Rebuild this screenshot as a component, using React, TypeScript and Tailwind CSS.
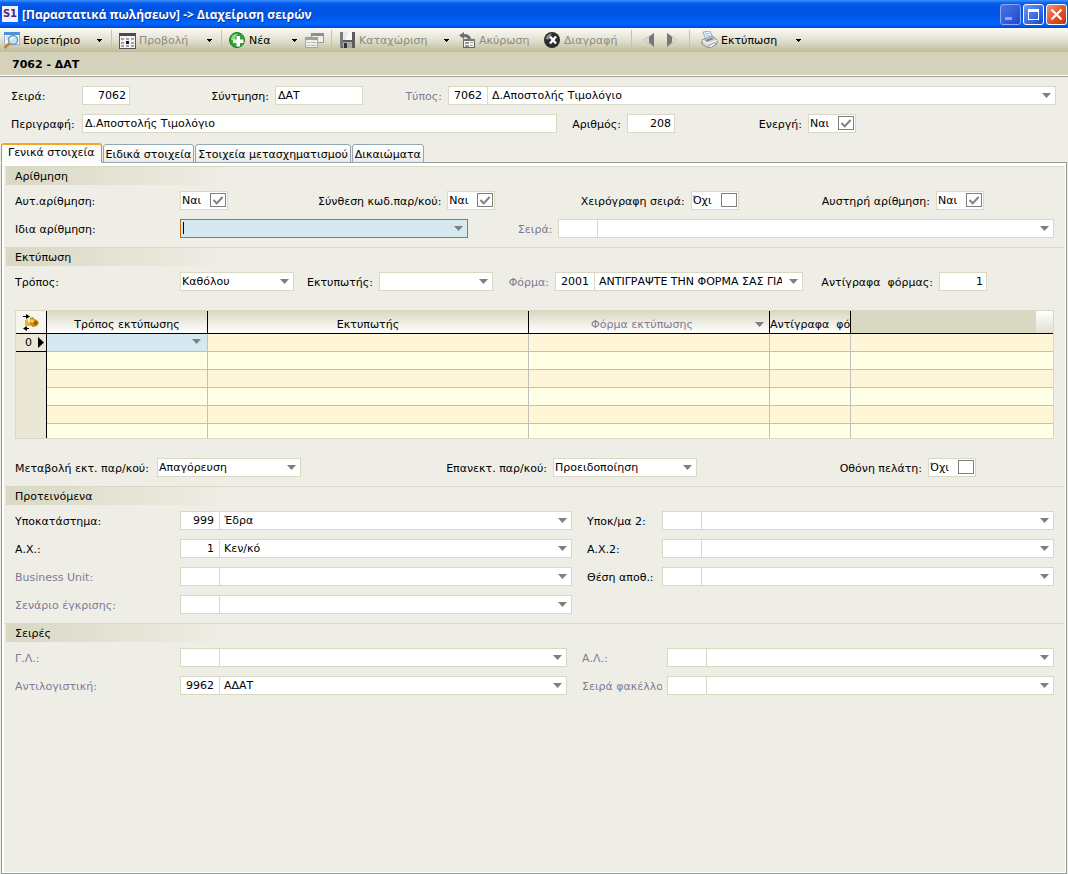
import { useId, useState, type ReactNode } from "react";
import clsx from "clsx";

const FIELD = "h-[19px] border border-[#d9d8c3] bg-white";

function Caret({ className }: { className?: string }) {
  return (
    <svg viewBox="0 0 9 5" className={clsx("h-[5px] w-[9px]", className)} aria-hidden="true">
      <path d="M0 0h9L4.5 5z" fill="#7f7f7f" />
    </svg>
  );
}

function MenuCaret() {
  return (
    <svg viewBox="0 0 5 3" className="h-[3px] w-[5px]" aria-hidden="true">
      <path d="M0 0h5v1H4v1H3v1H2V2H1V1H0z" fill="#000" />
    </svg>
  );
}

/* Form pieces */

interface LabelProps {
  htmlFor: string;
  children: ReactNode;
  muted?: boolean;
  align?: "left" | "right";
  className?: string;
}

function Label({ htmlFor, children, muted, align = "left", className }: LabelProps) {
  return (
    <label
      htmlFor={htmlFor}
      className={clsx(
        "overflow-hidden whitespace-pre pt-[2px] leading-[17px]",
        align === "right" && "pr-[6px] text-right",
        muted ? "text-[#7d7a99]" : "text-black",
        className
      )}
    >
      {children}
    </label>
  );
}

interface TextFieldProps {
  id: string;
  value?: string;
  numeric?: boolean;
  className?: string;
}

function TextField({ id, value = "", numeric, className }: TextFieldProps) {
  return (
    <input
      id={id}
      type="text"
      defaultValue={value}
      className={clsx(FIELD, "min-w-0 pb-px outline-none", numeric ? "pl-1 pr-[3px] text-right" : "px-[2px]", className)}
    />
  );
}

interface SelectFieldProps {
  id: string;
  value?: string;
  active?: boolean;
  className?: string;
}

function SelectField({ id, value = "", active, className }: SelectFieldProps) {
  return (
    <div
      className={clsx(
        "relative h-[19px] min-w-0 border",
        active ? "border-[#c8690d] bg-[#d6e8f0]" : "border-[#d9d8c3] bg-white",
        className
      )}
    >
      <select
        id={id}
        defaultValue={value}
        className="block h-[17px] w-full appearance-none truncate pb-px pl-px pr-5 text-clip outline-none"
      >
        <option value={value}>{value}</option>
      </select>
      {active && <span className="absolute left-[2px] top-[2px] h-3 w-px bg-black" />}
      <Caret className="pointer-events-none absolute right-1 top-[6px]" />
    </div>
  );
}

interface LookupFieldProps {
  id: string;
  code?: string;
  value?: string;
  label: string;
}

function LookupField({ id, code = "", value = "", label }: LookupFieldProps) {
  return (
    <div className={clsx(FIELD, "relative flex min-w-0")}>
      <input
        id={id}
        type="text"
        defaultValue={code}
        className="w-[39px] shrink-0 border-r border-[#d9d8c3] pb-px pr-[5px] text-right outline-none"
      />
      <select
        aria-label={label}
        defaultValue={value}
        className="block h-[17px] min-w-0 flex-1 appearance-none truncate pb-px pl-1 pr-5 text-clip outline-none"
      >
        <option value={value}>{value}</option>
      </select>
      <Caret className="pointer-events-none absolute right-1 top-[6px]" />
    </div>
  );
}

function CheckField({ id, initial }: { id: string; initial: boolean }) {
  const [checked, setChecked] = useState(initial);
  return (
    <div className={clsx(FIELD, "flex w-12 items-start justify-between pl-px pr-px pt-px")}>
      <span className="leading-[15px]">{checked ? "Ναι" : "Όχι"}</span>
      <span className="relative block h-[14px] w-4">
        <input
          id={id}
          type="checkbox"
          checked={checked}
          onChange={(e) => setChecked(e.target.checked)}
          className="block h-[14px] w-4 appearance-none border border-[#7f7f7f] bg-white"
        />
        {checked && (
          <svg viewBox="0 0 16 14" className="pointer-events-none absolute inset-0" aria-hidden="true">
            <path d="M3.5 7l3.2 3.4L12.6 4" fill="none" stroke="#7f7f7f" strokeWidth="2" />
          </svg>
        )}
      </span>
    </div>
  );
}

function Section({ title, children }: { title: string; children: ReactNode }) {
  return (
    <section className="border-t border-[#d9d8c3] pb-[9px]">
      <h2 className="ml-px h-[18px] w-56 bg-linear-to-r from-[#d9d8c3] to-[#efeee6] pl-[9px] leading-[19px]">{title}</h2>
      <div className="flex flex-col gap-[9px] px-[10px] pt-[6px]">{children}</div>
    </section>
  );
}

/* Toolbar icons */

function BrowseIcon() {
  return (
    <svg viewBox="0 0 17 17" className="size-[17px]">
      <rect x="1.5" y="1.5" width="15" height="11" fill="#f4f8fc" stroke="#8fb4d8" />
      <path d="M1 0h16v3H1z" fill="#4a93d6" />
      <path d="M3 5h3M3 7h2" stroke="#b9cfe2" />
      <circle cx="10" cy="8" r="4.5" fill="#c2e4f7" stroke="#7896ab" strokeWidth="1.4" />
      <path d="M7.500 7.500q1-2.500 4-2" fill="none" stroke="#fff" strokeWidth="1.400" />
      <path d="M6.600 11.200L1.500 16" stroke="#c8812f" strokeWidth="2.600" />
    </svg>
  );
}

function ViewIcon() {
  return (
    <svg viewBox="0 0 17 17" className="size-[17px]">
      <rect x=".5" y="1.500" width="16" height="15" fill="#f3f3f3" stroke="#555" />
      <path d="M0 1h17v3H0z" fill="#4a4a4a" />
      <path d="M2 6h3v2H2zM7 6h3v2H7zM12 6h3v2h-3zM2 10h3v2H2zM12 10h3v2h-3zM2 13h3v2H2zM7 13h3v2H7zM12 13h3v2h-3z" fill="#a3a3a3" />
      <path d="M7 9h3v3H7z" fill="#1a1a1a" />
    </svg>
  );
}

function NewIcon() {
  return (
    <svg viewBox="0 0 17 17" className="size-[17px]">
      <circle cx="8" cy="8" r="7.500" fill="#2fa535" stroke="#187a22" />
      <path d="M2 8q0-6 7-6.500Q6 4 6 8z" fill="#8fdc8a" />
      <path d="M7.500 4h3.500v3.500h3.500V11H11v3.500H7.500V11H4V7.500h3.500z" fill="#fff" />
    </svg>
  );
}

function WindowsIcon() {
  return (
    <svg viewBox="0 0 19 17" className="h-[17px] w-[19px]">
      <rect x="6.500" y="1.500" width="12" height="9" fill="#efefea" stroke="#9d9d9b" />
      <path d="M6 1h13v3H6z" fill="#8f8f8f" />
      <rect x=".5" y="5.500" width="12" height="10" fill="#efefea" stroke="#a5a5a3" />
      <path d="M0 5h13v3H0z" fill="#a1a1a1" />
      <path d="M2 10.500h3M6 10.500h5M2 13.500h3M6 13.500h5" stroke="#b5b5b3" />
    </svg>
  );
}

function SaveIcon() {
  return (
    <svg viewBox="0 0 17 17" className="size-[17px]">
      <path d="M1 0h15v16H2l-1-1z" fill="#5c5c5c" />
      <path d="M1 0h3v15H1z" fill="#7b7b7b" />
      <path d="M4 0h9v8H4z" fill="#e9e9e9" />
      <path d="M9 0h4v8H7z" fill="#f8f8f8" />
      <path d="M4 10h9v6H4z" fill="#a9a9a9" />
      <path d="M5 11h3v5H5z" fill="#333" />
    </svg>
  );
}

function UndoIcon() {
  return (
    <svg viewBox="0 0 17 17" className="size-[17px]">
      <path d="M5 0v2q6 0 7 5h-3Q8 5 5 5v2L0 3.500z" fill="#6f6f6f" />
      <rect x="4.500" y="7.500" width="11" height="8" fill="#f6f6f4" stroke="#666" />
      <path d="M4 7h12v2H4z" fill="#777" />
      <path d="M6 10h4v2H6zM6 13h4v2H6z" fill="#999" />
      <path d="M11 10.500h3M11 13.500h3" stroke="#999" />
    </svg>
  );
}

function DeleteIcon() {
  return (
    <svg viewBox="0 0 17 17" className="size-[17px]">
      <circle cx="8" cy="8" r="8" fill="#2d2d2d" />
      <path d="M1.500 7Q3 1.500 8 1.500q-2 2-3 6z" fill="#8d8d8d" />
      <path d="M6 4.500l6 7M12 4.500l-6 7" stroke="#fff" strokeWidth="2.400" />
    </svg>
  );
}

function PrevIcon() {
  return (
    <svg viewBox="0 0 12 14" className="h-[14px] w-3">
      <path d="M11 0v14L0 7z" fill="#b4b4b0" />
      <path d="M11 0v14L6 9V4z" fill="#777" />
      <path d="M6 4L0 7l6 3z" fill="#dadad4" />
    </svg>
  );
}

function NextIcon() {
  return (
    <svg viewBox="0 0 12 14" className="h-[14px] w-3">
      <path d="M0 0v14l11-7z" fill="#b4b4b0" />
      <path d="M0 0v14l5-5V4z" fill="#777" />
      <path d="M5 4l6 3-6 3z" fill="#dadad4" />
    </svg>
  );
}

function PrintIcon() {
  return (
    <svg viewBox="0 0 17 18" className="h-[18px] w-[17px]">
      <path d="M2 1l7-1 3 7-7 2z" fill="#e3f1fd" stroke="#6ea2d8" strokeWidth=".8" />
      <path d="M4 3l4-.6M5 5l4-.6" stroke="#8bb8e6" strokeWidth=".8" />
      <path d="M1 9l10-4 5 4v4l-9 4-6-4z" fill="#d8d8dc" stroke="#77777c" strokeWidth=".8" />
      <path d="M1.500 9.500L7 13l9-3.500" fill="none" stroke="#fff" />
      <path d="M4 9l7-2.500 2 1.500-7 2.800z" fill="#85858d" />
      <path d="M7 14.500l7-3 1 2-6 3.500z" fill="#f2f2f0" stroke="#77777c" strokeWidth=".7" />
    </svg>
  );
}

function GridIcon() {
  return (
    <svg viewBox="0 0 18 18" className="mx-auto size-[18px]">
      <path d="M1 3.500h5M7 15.500H3" stroke="#000" strokeWidth="1.200" />
      <path d="M4 1l4 2.500L4 6zM5 13l-4 2.500L5 18z" fill="#000" />
      <path d="M3 7l3-1v3h3v4H6l-3 1z" fill="#f3b23c" />
      <path d="M8 5l3-1 1 2 3 1 2 3-2 3-4 1-3-3z" fill="#c9860d" />
      <path d="M9 6l3 1-1 3-3-1z" fill="#ffcf4d" />
      <path d="M12 9l3-1v3l-3 1z" fill="#8a5c10" />
    </svg>
  );
}

/* Window chrome */

interface ToolButtonProps {
  icon: ReactNode;
  text?: string;
  label?: string;
  disabled?: boolean;
  className?: string;
}

function ToolButton({ icon, text, label, disabled, className }: ToolButtonProps) {
  return (
    <button
      type="button"
      disabled={disabled}
      aria-label={label}
      className={clsx(
        "flex h-6 shrink-0 items-center gap-[3px] whitespace-nowrap",
        disabled ? "text-[#8d8b83]" : "text-black",
        className
      )}
    >
      {icon}
      {text}
    </button>
  );
}

function MenuButton({ label }: { label: string }) {
  return (
    <button type="button" aria-label={label} className="flex h-6 w-[14px] shrink-0 items-center justify-center">
      <MenuCaret />
    </button>
  );
}

function Separator() {
  return <span className="mx-[5px] h-5 w-px shrink-0 bg-[#c5c3ab]" />;
}

function TitleBar() {
  const button = "flex size-[21px] items-center justify-center rounded-[3px] border";
  return (
    <header className="flex h-7 items-center bg-[linear-gradient(to_bottom,#3b93ff_0,#0a5ff0_3px,#0054e3_8px,#0055e7_15px,#0066ff_24px,#0046d5_28px)] pl-[2px] pr-px">
      <span className="flex h-4 w-4 items-center justify-center bg-[#f4f0fa] text-[10px] leading-4 font-bold text-[#4b2a86]">
        S1
      </span>
      <h1 className="min-w-0 flex-1 truncate pl-1 pt-[2px] font-['Open_Sans','Noto_Sans',sans-serif] text-[12px] leading-5 font-bold text-white [text-shadow:1px_1px_#0a2f8f]">
        [Παραστατικά πωλήσεων] -&gt; Διαχείριση σειρών
      </h1>
      <div className="flex gap-[2px]">
        <button type="button" aria-label="Ελαχιστοποίηση" className={clsx(button, "border-[#8fa8ee] bg-linear-to-br from-[#4c74e6] to-[#1c48d2]")}>
          <svg viewBox="0 0 19 19" className="size-[19px]">
            <path d="M4 12h7v3H4z" fill="#8ea9f2" />
          </svg>
        </button>
        <button type="button" aria-label="Μεγιστοποίηση" className={clsx(button, "border-white bg-linear-to-br from-[#6f97f5] to-[#1745d6]")}>
          <svg viewBox="0 0 19 19" className="size-[19px]">
            <path d="M4 4h11v11H4zM5 7v7h9V7z" fill="#fff" fillRule="evenodd" />
          </svg>
        </button>
        <button type="button" aria-label="Κλείσιμο" className={clsx(button, "border-white bg-linear-to-br from-[#f0947a] via-[#e1552f] to-[#c23408]")}>
          <svg viewBox="0 0 19 19" className="size-[19px]">
            <path d="M4.500 4.500l10 10M14.500 4.500l-10 10" stroke="#fff" strokeWidth="2.200" />
          </svg>
        </button>
      </div>
    </header>
  );
}

function Toolbar() {
  return (
    <nav className="flex h-6 items-center overflow-hidden bg-linear-to-b from-[#fbfbf8] via-[#e2e1d0] to-[#bfbd98] pl-px">
      <ToolButton icon={<BrowseIcon />} text="Ευρετήριο" className="w-[91px] pl-[2px]" />
      <MenuButton label="Επιλογές ευρετηρίου" />
      <Separator />
      <ToolButton icon={<ViewIcon />} text="Προβολή" disabled className="w-[85px] pl-[2px]" />
      <MenuButton label="Επιλογές προβολής" />
      <Separator />
      <ToolButton icon={<NewIcon />} text="Νέα" className="w-[60px] pl-[2px]" />
      <MenuButton label="Επιλογές νέας" />
      <ToolButton icon={<WindowsIcon />} label="Παράθυρα" disabled className="w-[25px] pl-1" />
      <Separator />
      <ToolButton icon={<SaveIcon />} text="Καταχώριση" disabled className="w-[102px] pl-[2px]" />
      <MenuButton label="Επιλογές καταχώρισης" />
      <ToolButton icon={<UndoIcon />} text="Ακύρωση" disabled className="w-[85px] pl-[6px]" />
      <ToolButton icon={<DeleteIcon />} text="Διαγραφή" disabled className="w-[88px] pl-[6px]" />
      <Separator />
      <ToolButton icon={<PrevIcon />} label="Προηγούμενο" disabled className="w-6 pl-[6px]" />
      <ToolButton icon={<NextIcon />} label="Επόμενο" disabled className="w-[23px] pl-[6px]" />
      <Separator />
      <ToolButton icon={<PrintIcon />} text="Εκτύπωση" className="w-24 pl-[6px]" />
      <MenuButton label="Επιλογές εκτύπωσης" />
    </nav>
  );
}

const tabs = ["Γενικά στοιχεία", "Ειδικά στοιχεία", "Στοιχεία μετασχηματισμού", "Δικαιώματα"];

function Tabs() {
  const [active, setActive] = useState(0);
  return (
    <div role="tablist" className="relative z-10 -mb-px flex h-5 items-end gap-px">
      {tabs.map((tab, index) => (
        <button
          key={tab}
          type="button"
          role="tab"
          aria-selected={index === active}
          onClick={() => setActive(index)}
          className={clsx(
            "whitespace-nowrap rounded-t-[3px] border",
            index === active
              ? "h-5 border-x-[#919b9c] border-t-2 border-t-[#f5a623] border-b-white bg-[#fcfcfa] px-[6px] pb-[2px]"
              : "h-[19px] border-[#91a7b4] bg-linear-to-b from-white to-[#ecebe2] px-[2px] pt-px"
          )}
        >
          {tab}
        </button>
      ))}
    </div>
  );
}

const emptyRows = ["bg-[#ffffe6]", "bg-[#fff5d7]", "bg-[#ffffe6]", "bg-[#fff5d7]", "bg-[#ffffe6]"];

function PrintGrid() {
  const head = "h-[23px] border-b border-r border-black bg-linear-to-b from-[#d9d8c3] to-white p-0 pt-1 font-normal whitespace-pre";
  const cell = "border-b border-r border-[#c0c0c0] p-0";
  return (
    <table className="my-[10px] w-full table-fixed border-separate border-spacing-0 border border-[#d9d8c3]">
      <colgroup>
        <col className="w-[31px]" />
        <col className="w-[161px]" />
        <col className="w-[321px]" />
        <col className="w-[241px]" />
        <col className="w-[81px]" />
        <col />
      </colgroup>
      <thead>
        <tr>
          <th className="h-[23px] border-b border-r border-black bg-[#f6f5ee] p-0">
            <button type="button" aria-label="Στήλες" className="block w-full">
              <GridIcon />
            </button>
          </th>
          <th className={head}>Τρόπος εκτύπωσης</th>
          <th className={head}>Εκτυπωτής</th>
          <th className={head}>
            <div className="flex items-center pr-[5px]">
              <span className="flex-1 text-[#7d7a99]">Φόρμα εκτύπωσης</span>
              <Caret />
            </div>
          </th>
          <th className={clsx(head, "overflow-hidden text-left")}>Αντίγραφα  φόρμας</th>
          <th className="h-[23px] border-b border-black bg-[#d9d8c3] p-0" aria-label="Κενή στήλη">
            <div className="ml-auto h-[22px] w-[17px] bg-linear-to-b from-white to-[#e0dfcf]" />
          </th>
        </tr>
      </thead>
      <tbody>
        <tr className="bg-[#fff5d7]">
          <td className="h-[18px] border-b border-r border-black bg-[#ebe7d6] p-0">
            <div className="flex items-center justify-between pl-[9px] pr-[2px] leading-[15px]">
              0
              <svg viewBox="0 0 6 11" className="h-[11px] w-[6px]" aria-hidden="true">
                <path d="M0 0l6 5.500L0 11z" fill="#000" />
              </svg>
            </div>
          </td>
          <td className={clsx(cell, "bg-[#d6e8f0]")}>
            <div className="relative h-[17px]">
              <select aria-label="Τρόπος εκτύπωσης" className="block h-[17px] w-full appearance-none outline-none">
                <option value=""></option>
              </select>
              <Caret className="pointer-events-none absolute right-[6px] top-[5px]" />
            </div>
          </td>
          <td className={cell} />
          <td className={cell} />
          <td className={cell} />
          <td className="border-b border-[#c0c0c0] p-0" />
        </tr>
        {emptyRows.map((color, index) => {
          const last = index === emptyRows.length - 1;
          const plain = clsx("border-r border-[#c0c0c0] p-0", !last && "border-b");
          return (
            <tr key={index} className={color}>
              <td className={clsx("border-r border-r-black bg-[#ebe7d6] p-0", last ? "h-[14px]" : "h-[18px]")} />
              <td className={plain} />
              <td className={plain} />
              <td className={plain} />
              <td className={plain} />
              <td className={clsx("border-[#c0c0c0] p-0", !last && "border-b")} />
            </tr>
          );
        })}
      </tbody>
    </table>
  );
}

export default function App() {
  const uid = useId();
  const id = (name: string) => `${uid}-${name}`;

  return (
    <div className="flex min-h-screen flex-col bg-[#efeee6] font-['DejaVu_Sans',sans-serif] text-[11px] leading-[15px] text-black">
      <TitleBar />
      <Toolbar />
      <div className="h-[25px] border-b border-[#9d9d9b] bg-[#d5d2bc] pl-3 text-[11px] leading-[25px] font-bold shadow-[inset_0_-1px_#ffffff]">
        7062 - ΔΑΤ
      </div>

      <div className="flex flex-col gap-[9px] pt-[9px] pb-[10px] pl-[11px] pr-3">
        <div className="grid grid-cols-[71px_48px_145px_88px_85px_1fr]">
          <Label htmlFor={id("series")}>Σειρά:</Label>
          <TextField id={id("series")} value="7062" numeric />
          <Label htmlFor={id("short")} align="right">Σύντμηση:</Label>
          <TextField id={id("short")} value="ΔΑΤ" />
          <Label htmlFor={id("type")} align="right" muted>Τύπος:</Label>
          <LookupField id={id("type")} code="7062" value="Δ.Αποστολής Τιμολόγιο" label="Τύπος" />
        </div>
        <div className="grid grid-cols-[71px_1fr_70px_48px_133px_48px] pr-[200px]">
          <Label htmlFor={id("descr")}>Περιγραφή:</Label>
          <TextField id={id("descr")} value="Δ.Αποστολής Τιμολόγιο" />
          <Label htmlFor={id("number")} align="right">Αριθμός:</Label>
          <TextField id={id("number")} value="208" numeric />
          <Label htmlFor={id("enabled")} align="right">Ενεργή:</Label>
          <CheckField id={id("enabled")} initial />
        </div>
      </div>

      <div className="flex flex-1 flex-col px-px">
        <Tabs />
        <main className="flex flex-1 flex-col border border-[#919b9c] bg-white pt-[3px] pb-px pl-[2px] pr-px">
          <div className="flex-1 bg-[#efeee6] px-px">
            <Section title="Αρίθμηση">
              <div className="grid grid-cols-[213px_267fr_243fr_245fr] pr-[70px]">
                <div className="flex">
                  <Label htmlFor={id("auto")} className="w-[165px]">Αυτ.αρίθμηση:</Label>
                  <CheckField id={id("auto")} initial />
                </div>
                <div className="flex justify-end">
                  <Label htmlFor={id("compose")} align="right">Σύνθεση κωδ.παρ/κού:</Label>
                  <CheckField id={id("compose")} initial />
                </div>
                <div className="flex justify-end">
                  <Label htmlFor={id("manual")} align="right">Χειρόγραφη σειρά:</Label>
                  <CheckField id={id("manual")} initial={false} />
                </div>
                <div className="flex justify-end">
                  <Label htmlFor={id("strict")} align="right">Αυστηρή αρίθμηση:</Label>
                  <CheckField id={id("strict")} initial />
                </div>
              </div>
              <div className="grid grid-cols-[165px_288fr_90px_495fr]">
                <Label htmlFor={id("same")}>Ιδια αρίθμηση:</Label>
                <SelectField id={id("same")} active />
                <Label htmlFor={id("sameSeries")} align="right" muted>Σειρά:</Label>
                <LookupField id={id("sameSeries")} label="Σειρά" />
              </div>
            </Section>

            <Section title="Εκτύπωση">
              <div className="grid grid-cols-[165px_114fr_85px_114fr_62px_248fr_136px_48px] pr-[67px]">
                <Label htmlFor={id("mode")}>Τρόπος:</Label>
                <SelectField id={id("mode")} value="Καθόλου" />
                <Label htmlFor={id("printer")} align="right">Εκτυπωτής:</Label>
                <SelectField id={id("printer")} />
                <Label htmlFor={id("form")} align="right" muted>Φόρμα:</Label>
                <LookupField id={id("form")} code="2001" value="ΑΝΤΙΓΡΑΨΤΕ ΤΗΝ ΦΟΡΜΑ ΣΑΣ ΓΙΑ" label="Φόρμα" />
                <Label htmlFor={id("copies")} align="right">Αντίγραφα  φόρμας:</Label>
                <TextField id={id("copies")} value="1" numeric />
              </div>
              <PrintGrid />
              <div className="grid grid-cols-[142px_144fr_252px_144fr_231px_48px] pr-[78px]">
                <Label htmlFor={id("change")}>Μεταβολή εκτ. παρ/κού:</Label>
                <SelectField id={id("change")} value="Απαγόρευση" />
                <Label htmlFor={id("reprint")} align="right">Επανεκτ. παρ/κού:</Label>
                <SelectField id={id("reprint")} value="Προειδοποίηση" />
                <Label htmlFor={id("display")} align="right">Οθόνη πελάτη:</Label>
                <CheckField id={id("display")} initial={false} />
              </div>
            </Section>

            <Section title="Προτεινόμενα">
              <div className="grid grid-cols-[165px_1fr_90px_1fr] gap-y-[9px]">
                <Label htmlFor={id("branch")}>Υποκατάστημα:</Label>
                <LookupField id={id("branch")} code="999" value="Έδρα" label="Υποκατάστημα" />
                <Label htmlFor={id("branch2")} className="pl-[15px]">Υποκ/μα 2:</Label>
                <LookupField id={id("branch2")} label="Υποκ/μα 2" />
                <Label htmlFor={id("wh")}>Α.Χ.:</Label>
                <LookupField id={id("wh")} code="1" value="Κεν/κό" label="Α.Χ." />
                <Label htmlFor={id("wh2")} className="pl-[15px]">Α.Χ.2:</Label>
                <LookupField id={id("wh2")} label="Α.Χ.2" />
                <Label htmlFor={id("unit")} muted>Business Unit:</Label>
                <LookupField id={id("unit")} label="Business Unit" />
                <Label htmlFor={id("bin")} className="pl-[15px]">Θέση αποθ.:</Label>
                <LookupField id={id("bin")} label="Θέση αποθ." />
                <Label htmlFor={id("approval")} muted>Σενάριο έγκρισης:</Label>
                <LookupField id={id("approval")} label="Σενάριο έγκρισης" />
              </div>
            </Section>

            <Section title="Σειρές">
              <div className="grid grid-cols-[165px_1fr_100px_1fr] gap-y-[9px]">
                <Label htmlFor={id("gl")} muted>Γ.Λ.:</Label>
                <LookupField id={id("gl")} label="Γ.Λ." />
                <Label htmlFor={id("al")} muted className="ml-[15px] mr-[5px]">Α.Λ.:</Label>
                <LookupField id={id("al")} label="Α.Λ." />
                <Label htmlFor={id("reverse")} muted>Αντιλογιστική:</Label>
                <LookupField id={id("reverse")} code="9962" value="ΑΔΑΤ" label="Αντιλογιστική" />
                <Label htmlFor={id("folder")} muted className="ml-[15px] mr-[5px]">Σειρά φακέλλου:</Label>
                <LookupField id={id("folder")} label="Σειρά φακέλλου" />
              </div>
            </Section>
          </div>
        </main>
      </div>
    </div>
  );
}
